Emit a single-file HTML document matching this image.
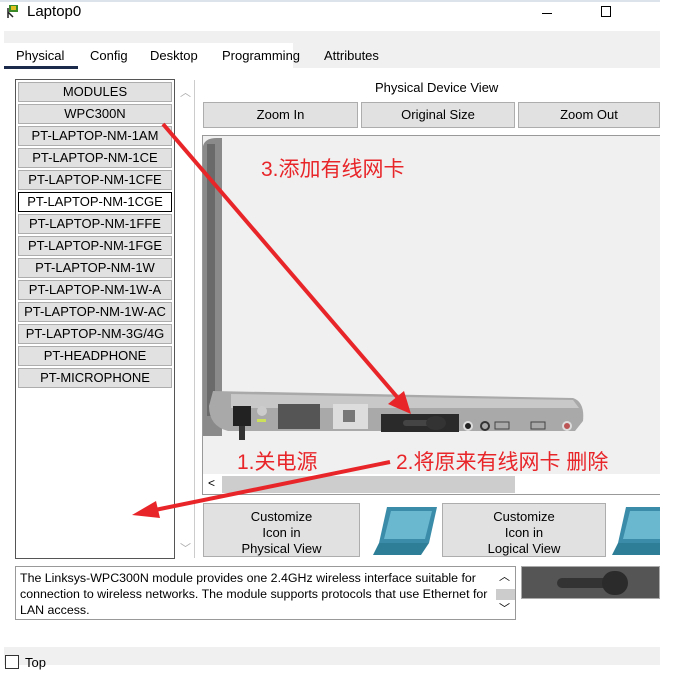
<!DOCTYPE html>
<html><head><meta charset="utf-8"><style>
*{box-sizing:border-box;margin:0;padding:0}
body{width:699px;height:673px;background:#fff;position:relative;overflow:hidden;font-family:"Liberation Sans","Noto Sans CJK SC",sans-serif;font-size:13px;color:#000}
.a{position:absolute}
.btn{position:absolute;background:#e1e1e1;border:1px solid #adadad;text-align:center;font-size:13px}
.it{position:absolute;left:18px;width:154px;height:20px;background:#e1e1e1;border:1px solid #adadad;text-align:center;line-height:18px;font-size:13px}
.red{color:#e8262a;font-size:21px;position:absolute}
</style></head><body>
<div class="a" style="left:0;top:0;width:660px;height:2px;background:#dde3ea"></div>
<div class="a" style="left:6px;top:4px;width:14px;height:16px">
<svg width="14" height="16"><rect x="3" y="1" width="9" height="7" fill="#3a8a2a"/><rect x="5" y="2" width="5" height="4" fill="#e0c020"/><path d="M2 4 L2 14 M2 8 L7 13" stroke="#222" stroke-width="1.5"/></svg></div>
<div class="a" style="left:27px;top:3px;font-size:15px">Laptop0</div>
<div class="a" style="left:542px;top:13px;width:10px;height:1px;background:#000"></div>
<div class="a" style="left:601px;top:6px;width:10px;height:11px;border:1px solid #000"></div>
<div class="a" style="left:4px;top:31px;width:656px;height:12px;background:#f0f0f0"></div>
<div class="a" style="left:293px;top:43px;width:367px;height:25px;background:#f0f0f0"></div>
<div class="a" style="left:16px;top:48px;font-size:13px">Physical</div>
<div class="a" style="left:90px;top:48px">Config</div>
<div class="a" style="left:150px;top:48px">Desktop</div>
<div class="a" style="left:222px;top:48px">Programming</div>
<div class="a" style="left:324px;top:48px">Attributes</div>
<div class="a" style="left:4px;top:66px;width:74px;height:3px;background:#1b2a4a"></div>

<div class="a" style="left:15px;top:79px;width:160px;height:480px;border:1px solid #555"></div>
<div class="a" style="left:175px;top:80px;width:20px;height:478px;background:#fff;border-right:1px solid #ccc"></div>
<div class="a" style="left:180px;top:84px;color:#aaa;font-size:11px">︿</div>
<div class="a" style="left:180px;top:540px;color:#aaa;font-size:11px">﹀</div>
<div class="it" style="top:82px">MODULES</div>
<div class="it" style="top:104px">WPC300N</div>
<div class="it" style="top:126px">PT-LAPTOP-NM-1AM</div>
<div class="it" style="top:148px">PT-LAPTOP-NM-1CE</div>
<div class="it" style="top:170px">PT-LAPTOP-NM-1CFE</div>
<div class="it" style="top:192px;background:#fff;border:1px solid #000">PT-LAPTOP-NM-1CGE</div>
<div class="it" style="top:214px">PT-LAPTOP-NM-1FFE</div>
<div class="it" style="top:236px">PT-LAPTOP-NM-1FGE</div>
<div class="it" style="top:258px">PT-LAPTOP-NM-1W</div>
<div class="it" style="top:280px">PT-LAPTOP-NM-1W-A</div>
<div class="it" style="top:302px">PT-LAPTOP-NM-1W-AC</div>
<div class="it" style="top:324px">PT-LAPTOP-NM-3G/4G</div>
<div class="it" style="top:346px">PT-HEADPHONE</div>
<div class="it" style="top:368px">PT-MICROPHONE</div>

<div class="a" style="left:375px;top:80px">Physical Device View</div>
<div class="btn" style="left:203px;top:102px;width:155px;height:26px;line-height:24px">Zoom In</div>
<div class="btn" style="left:361px;top:102px;width:154px;height:26px;line-height:24px">Original Size</div>
<div class="btn" style="left:518px;top:102px;width:142px;height:26px;line-height:24px">Zoom Out</div>

<div class="a" style="left:202px;top:135px;width:458px;height:360px;background:#f0f0f0;border:1px solid #999;border-right:none"></div>
<svg class="a" style="left:203px;top:136px" width="457" height="340">
<path d="M0 10 Q2 2 14 2 L19 2 L19 300 L0 300 Z" fill="#8a8a8a"/>
<path d="M4 8 L12 8 L12 280 L4 280Z" fill="#6a6a6a"/>
<path d="M10 255 L370 262 Q382 266 380 285 L372 295 L25 295 Q6 290 6 270 Z" fill="#a9a9a9"/>
<path d="M28 258 L370 264 L376 272 L28 272 Z" fill="#c8c8c8"/>
<rect x="30" y="270" width="18" height="20" fill="#222"/>
<circle cx="59" cy="275" r="5" fill="#ccc"/><rect x="54" y="283" width="9" height="3" fill="#cde05a"/>
<rect x="75" y="268" width="42" height="25" fill="#555"/>
<rect x="130" y="268" width="35" height="25" fill="#ddd"/><rect x="140" y="274" width="12" height="12" fill="#777"/>
<rect x="178" y="278" width="78" height="18" fill="#2a2a2a"/>
<rect x="200" y="284" width="40" height="6" rx="3" fill="#444"/><ellipse cx="233" cy="287" rx="10" ry="7" fill="#333"/>
<circle cx="265" cy="290" r="4" fill="#222" stroke="#ddd" stroke-width="2"/><circle cx="282" cy="290" r="4" fill="none" stroke="#333" stroke-width="2"/>
<rect x="292" y="286" width="14" height="7" fill="none" stroke="#444"/><rect x="328" y="286" width="14" height="7" fill="none" stroke="#444"/>
<circle cx="364" cy="290" r="4" fill="#b55" stroke="#ddd" stroke-width="2"/>
<rect x="36" y="290" width="6" height="14" fill="#333"/>
</svg>
<div class="a" style="left:203px;top:474px;width:457px;height:20px;background:#fff"></div>
<div class="a" style="left:222px;top:476px;width:293px;height:17px;background:#cdcdcd"></div>
<div class="a" style="left:208px;top:476px;font-size:12px">&lt;</div>

<div class="btn" style="left:203px;top:503px;width:157px;height:54px;padding-top:5px;line-height:16px">Customize<br>Icon in<br>Physical View</div>
<div class="btn" style="left:442px;top:503px;width:164px;height:54px;padding-top:5px;line-height:16px">Customize<br>Icon in<br>Logical View</div>
<svg class="a" style="left:373px;top:505px" width="66" height="52"><path d="M14 2 L64 2 L56 38 L6 38Z" fill="#3a8ca8"/><path d="M18 6 L59 6 L52 34 L11 34Z" fill="#6ab8d0"/><path d="M6 38 L56 38 L48 50 L0 50Z" fill="#2f7e98"/></svg>
<svg class="a" style="left:612px;top:505px" width="48" height="52"><path d="M14 2 L64 2 L56 38 L6 38Z" fill="#3a8ca8"/><path d="M18 6 L59 6 L52 34 L11 34Z" fill="#6ab8d0"/><path d="M6 38 L56 38 L48 50 L0 50Z" fill="#2f7e98"/></svg>

<div class="a" style="left:15px;top:566px;width:501px;height:54px;border:1px solid #999;padding:3px 24px 3px 4px;font-size:12.4px;line-height:16px">The Linksys-WPC300N module provides one 2.4GHz wireless interface suitable for connection to wireless networks. The module supports protocols that use Ethernet for LAN access.</div>
<div class="a" style="left:496px;top:567px;width:19px;height:52px;background:#fff"><div style="margin-top:22px;height:11px;background:#ccc"></div></div>
<div class="a" style="left:499px;top:568px;font-size:11px">︿</div><div class="a" style="left:499px;top:600px;font-size:11px">﹀</div>
<div class="a" style="left:521px;top:566px;width:139px;height:33px;background:#555;border:1px solid #aaa"><div style="position:absolute;left:35px;top:11px;width:60px;height:10px;background:#333;border-radius:5px"></div><div style="position:absolute;left:80px;top:4px;width:26px;height:24px;background:#2b2b2b;border-radius:12px"></div></div>

<div class="a" style="left:4px;top:647px;width:656px;height:18px;background:#f0f0f0"></div>
<div class="a" style="left:5px;top:655px;width:14px;height:14px;border:1px solid #333;background:#fff"></div>
<div class="a" style="left:25px;top:655px">Top</div>

<div class="red" style="left:261px;top:153px">3.添加有线网卡</div>
<div class="red" style="left:237px;top:446px">1.关电源</div>
<div class="red" style="left:396px;top:446px">2.将原来有线网卡 删除</div>
<svg class="a" style="left:0;top:0" width="699" height="673">
<line x1="163" y1="124" x2="398" y2="398" stroke="#e8262a" stroke-width="4"/>
<path d="M411 414 L388 404 L404 391 Z" fill="#e8262a"/>
<line x1="390" y1="462" x2="155" y2="510" stroke="#e8262a" stroke-width="4"/>
<path d="M132 515 L156 501 L160 518 Z" fill="#e8262a"/>
</svg>
</body></html>
